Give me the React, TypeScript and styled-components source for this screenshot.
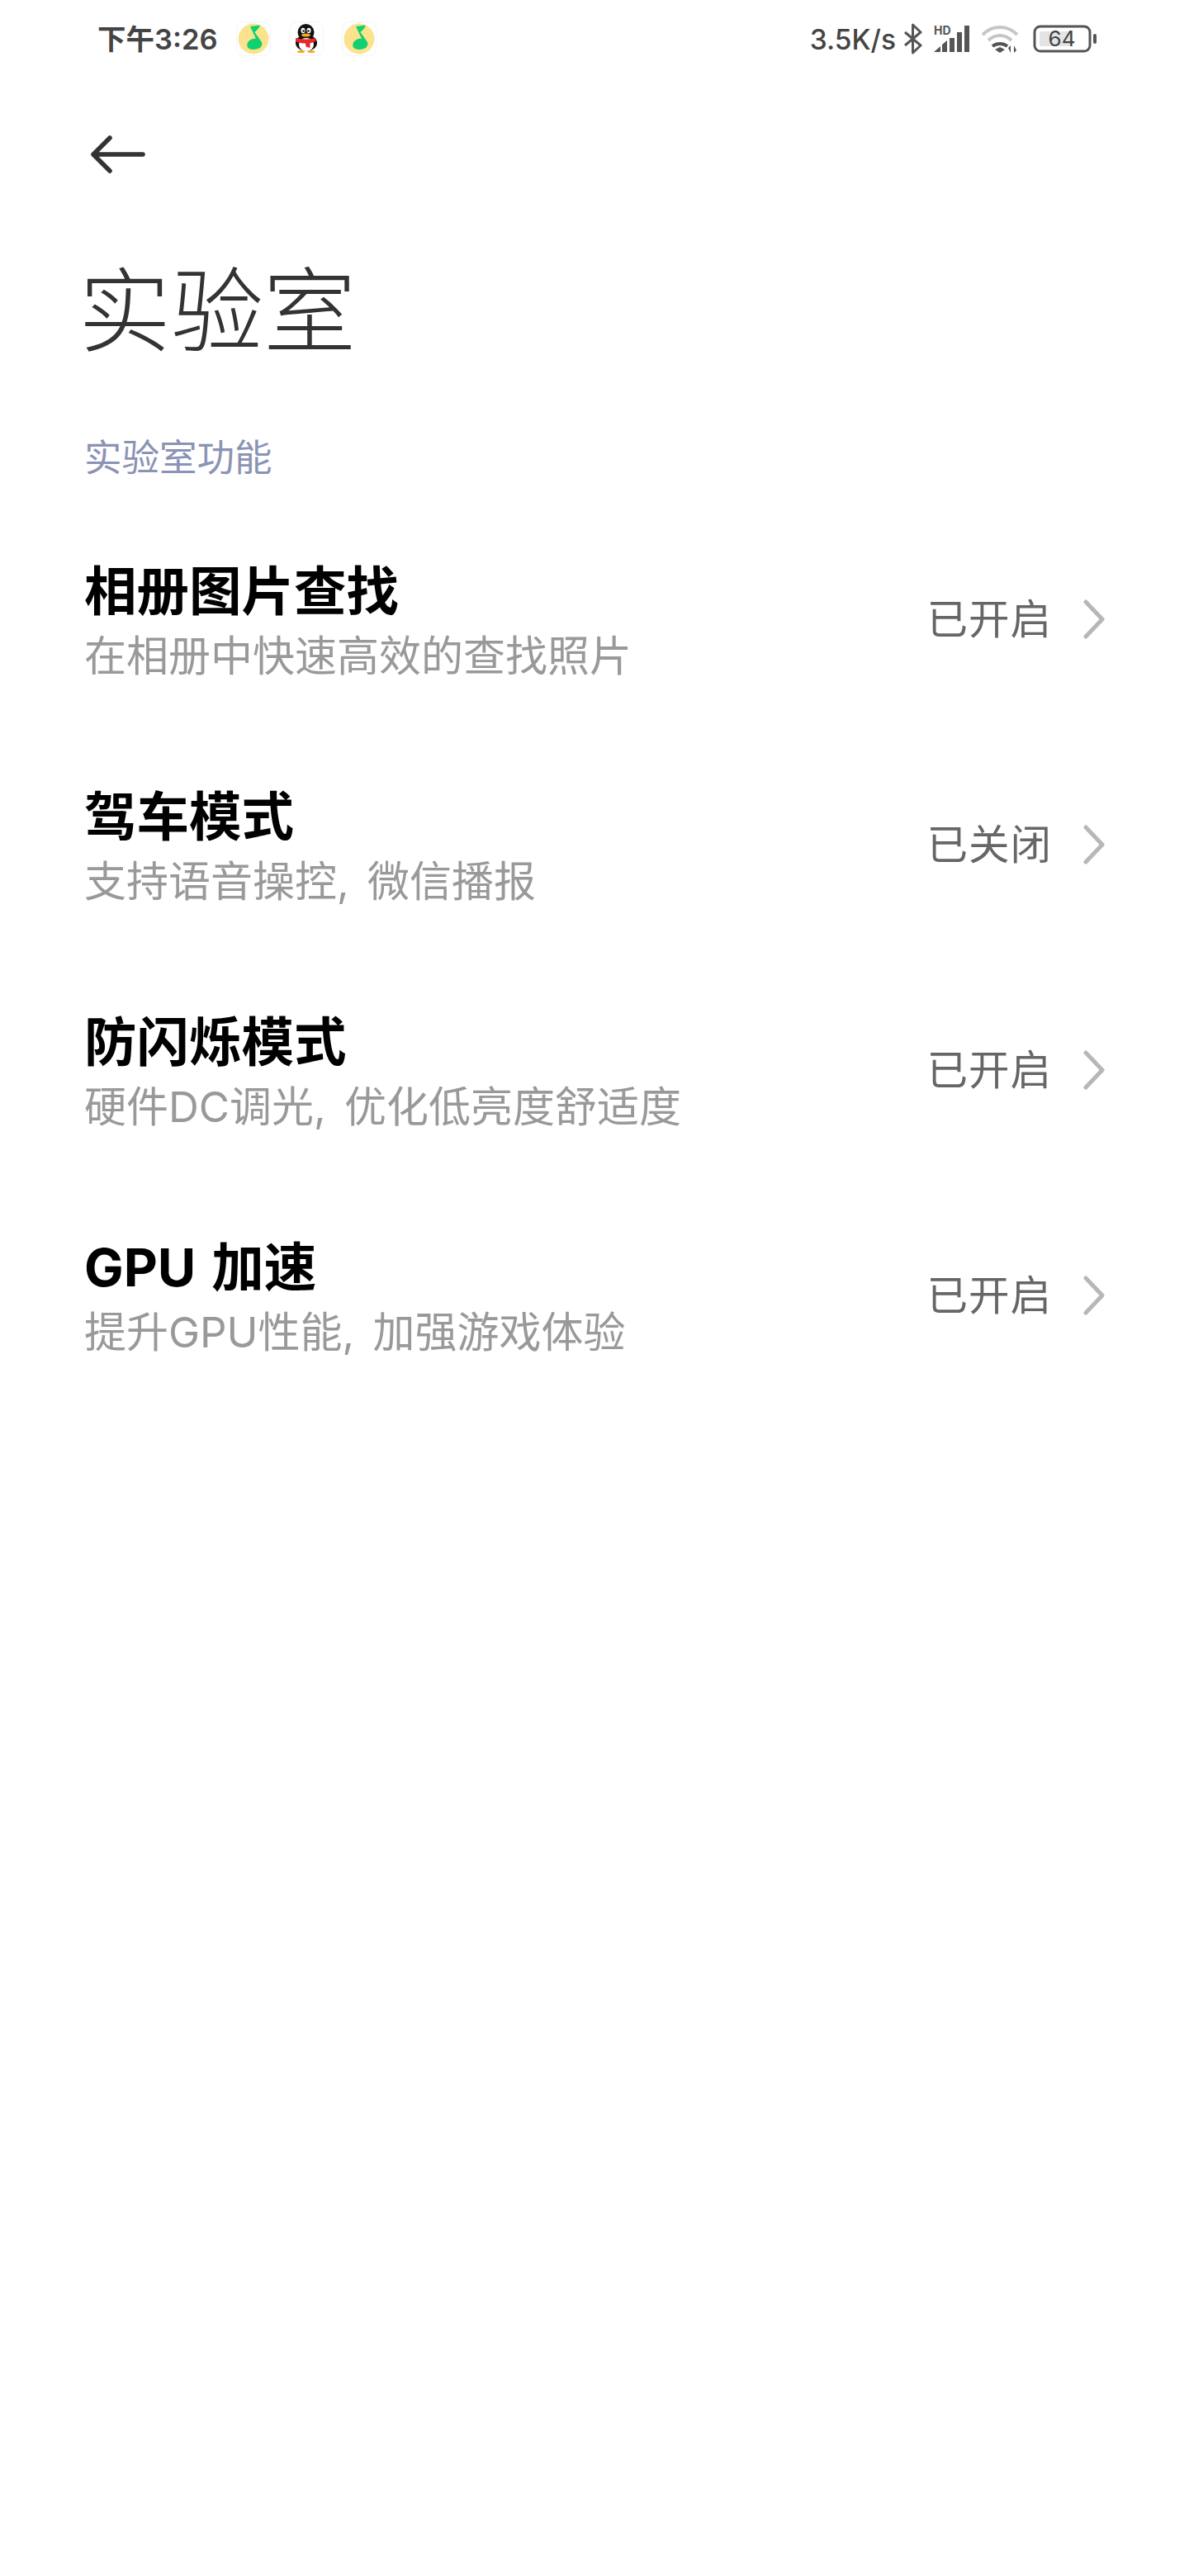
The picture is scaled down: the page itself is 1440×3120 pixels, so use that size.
import React from 'react'
import styled, { createGlobalStyle } from 'styled-components'

const Global = createGlobalStyle`
  html, body { margin: 0; padding: 0; background: #fff; }
  body { font-family: "Inter", "Noto Sans CJK SC", "Noto Sans", sans-serif; }
`

const Page = styled.div`
  width: 1440px;
  height: 3120px;
  background: #fff;
  overflow: hidden;
`

const StatusBar = styled.div`
  height: 94px;
  padding: 0 111px 0 118px;
  display: flex;
  align-items: center;
  justify-content: space-between;
  box-sizing: border-box;
`

const StatusSide = styled.div`
  display: flex;
  align-items: center;
`

const StatusText = styled.span`
  margin-top: 2px;
  font-size: 34.5px;
  font-weight: 600;
  color: #444;
  line-height: 40px;
  white-space: nowrap;
`

const SpeedText = styled(StatusText)`
  font-size: 33.5px;
  font-weight: 500;
`

const AppIcons = styled.div`
  display: flex;
  gap: 22px;
  margin-left: 22px;
`

const NetIcons = styled.div`
  display: flex;
  align-items: center;
  gap: 14px;
  margin-left: 9px;
`

const BackRow = styled.div`
  height: 92px;
  margin-top: 47px;
  padding-left: 110px;
  display: flex;
  align-items: center;
`

const Title = styled.h1`
  margin: 74px 0 0 95px;
  font-size: 112px;
  font-weight: 300;
  line-height: 140px;
  color: #333;
`

const SectionLabel = styled.div`
  margin: 78px 0 0 102px;
  font-size: 45.5px;
  line-height: 60px;
  color: #8b93b5;
`

const List = styled.div`
  margin-top: 30px;
  display: flex;
  flex-direction: column;
`

const Row = styled.div`
  height: 273px;
  padding: 0 102px 0 102px;
  display: flex;
  align-items: center;
  justify-content: space-between;
`

const RowText = styled.div`
  display: flex;
  flex-direction: column;
`

const RowTitle = styled.div`
  font-size: 63.5px;
  font-weight: 700;
  line-height: 80px;
  color: #000;
  white-space: pre;
  word-spacing: 4px;
`

const RowSub = styled.div`
  font-size: 51px;
  line-height: 66px;
  margin-top: 6px;
  color: #999;
  white-space: pre;
  word-spacing: 8px;
`

const RowRight = styled.div`
  display: flex;
  align-items: center;
  gap: 38px;
  padding-bottom: 3px;
`

const RowValue = styled.span`
  font-size: 49.5px;
  line-height: 60px;
  color: #666;
  letter-spacing: 1px;
`

const MusicIcon = () => (
  <svg width="42" height="42" viewBox="0 0 42 42">
    <rect x="0.5" y="0.5" width="41" height="41" rx="9" fill="#fff" stroke="#f4f4f4" />
    <circle cx="21" cy="21" r="18.5" fill="#fbe38e" />
    <path
      d="M17 6L29 4.500C28 8 25 11 22.500 13L31 25C33 30 28 34 21 34C15 34 12.500 31 13.500 27C14.500 23 20 20 24 21Z"
      fill="#10d070"
    />
  </svg>
)

const QQIcon = () => (
  <svg width="42" height="42" viewBox="0 0 42 42">
    <rect x="0.5" y="0.5" width="41" height="41" rx="9" fill="#fff" stroke="#f4f4f4" />
    <ellipse cx="21" cy="26" rx="13" ry="10" fill="#111" />
    <ellipse cx="20.500" cy="13" rx="10" ry="10" fill="#111" />
    <ellipse cx="21" cy="28" rx="9" ry="8" fill="#fff" />
    <ellipse cx="17" cy="11" rx="2.500" ry="3.200" fill="#fff" />
    <ellipse cx="24" cy="11" rx="2.500" ry="3.200" fill="#fff" />
    <circle cx="17.500" cy="11.500" r="1.200" fill="#111" />
    <circle cx="23.500" cy="11.500" r="1.200" fill="#111" />
    <ellipse cx="20.500" cy="16.500" rx="5.500" ry="2" fill="#f6a81c" />
    <path d="M8 20c8 2 16 2 24 0l.5 4-7 2.500v5.500l-5-1.500-.5-4c-4 0-9 0-12-3z" fill="#e8282b" />
    <ellipse cx="14.500" cy="36.500" rx="4.500" ry="1.600" fill="#f6a81c" />
    <ellipse cx="27" cy="36.500" rx="4.500" ry="1.600" fill="#f6a81c" />
  </svg>
)

const Bluetooth = () => (
  <svg width="23" height="38" viewBox="0 0 23 38" fill="none" stroke="#555" strokeWidth="3" strokeLinejoin="round">
    <path d="M2 11l19 16-9.500 9V2l9.500 9L2 27" />
  </svg>
)

const Signal = () => (
  <svg width="44" height="34" viewBox="0 0 44 34" overflow="visible">
    <text x="0" y="12" fontSize="14" fontWeight="700" fill="#555" fontFamily="Inter, sans-serif">HD</text>
    <path
      d="M0 33l8-7v7zM10 33v-9l6-5v14zM19 33V16h6v17zM28 33V9h6v24zM37 33V1h6v32z"
      fill="#555"
    />
  </svg>
)

const Wifi = () => (
  <svg width="48" height="34" viewBox="0 0 48 34" fill="none">
    <path d="M1 12c12-12 30-12 42 0" stroke="#c6c6c6" strokeWidth="4" />
    <path d="M8 19c8-8 20-8 28 0" stroke="#c6c6c6" strokeWidth="4" />
    <path d="M13 26c5-4 13-4 18 0" stroke="#555" strokeWidth="4" />
    <path d="M16 30l6-3 6 3-6 4z" fill="#555" />
    <path d="M35 34v-9l-3 3zM39 25v9l3-3z" fill="#555" />
  </svg>
)

const Battery = () => (
  <svg width="78" height="34" viewBox="0 0 78 34">
    <rect x="2" y="2" width="67" height="30" rx="7" fill="#fff" stroke="#555" strokeWidth="3" />
    <rect x="8" y="8" width="40" height="18" rx="2" fill="#e4e4e4" />
    <text x="35" y="26" textAnchor="middle" fontSize="26" fill="#444" fontFamily="Inter, sans-serif">64</text>
    <rect x="73" y="11" width="4" height="12" rx="2" fill="#555" />
  </svg>
)

const Chevron = () => (
  <svg width="26" height="48" viewBox="0 0 26 48" fill="none" stroke="#b7b7b7" strokeWidth="5" strokeLinecap="round" strokeLinejoin="round">
    <path d="M3 3l20 21L3 45" />
  </svg>
)

const BackArrow = () => (
  <svg width="66" height="46" viewBox="0 0 66 46" fill="none" stroke="#333" strokeWidth="5.500" strokeLinecap="round" strokeLinejoin="round">
    <path d="M23 3L3 23l20 20M3 23h60" />
  </svg>
)

const rows = [
  { title: '相册图片查找', sub: '在相册中快速高效的查找照片', value: '已开启' },
  { title: '驾车模式', sub: '支持语音操控, 微信播报', value: '已关闭' },
  { title: '防闪烁模式', sub: '硬件DC调光, 优化低亮度舒适度', value: '已开启' },
  { title: 'GPU 加速', sub: '提升GPU性能, 加强游戏体验', value: '已开启' }
]

export default function App () {
  return (
    <Page>
      <Global />
      <StatusBar>
        <StatusSide>
          <StatusText>下午3:26</StatusText>
          <AppIcons>
            <MusicIcon />
            <QQIcon />
            <MusicIcon />
          </AppIcons>
        </StatusSide>
        <StatusSide>
          <SpeedText>3.5K/s</SpeedText>
          <NetIcons>
            <Bluetooth />
            <Signal />
            <Wifi />
            <Battery />
          </NetIcons>
        </StatusSide>
      </StatusBar>
      <BackRow>
        <BackArrow />
      </BackRow>
      <Title>实验室</Title>
      <SectionLabel>实验室功能</SectionLabel>
      <List>
        {rows.map(r => (
          <Row key={r.title}>
            <RowText>
              <RowTitle>{r.title}</RowTitle>
              <RowSub>{r.sub}</RowSub>
            </RowText>
            <RowRight>
              <RowValue>{r.value}</RowValue>
              <Chevron />
            </RowRight>
          </Row>
        ))}
      </List>
    </Page>
  )
}
